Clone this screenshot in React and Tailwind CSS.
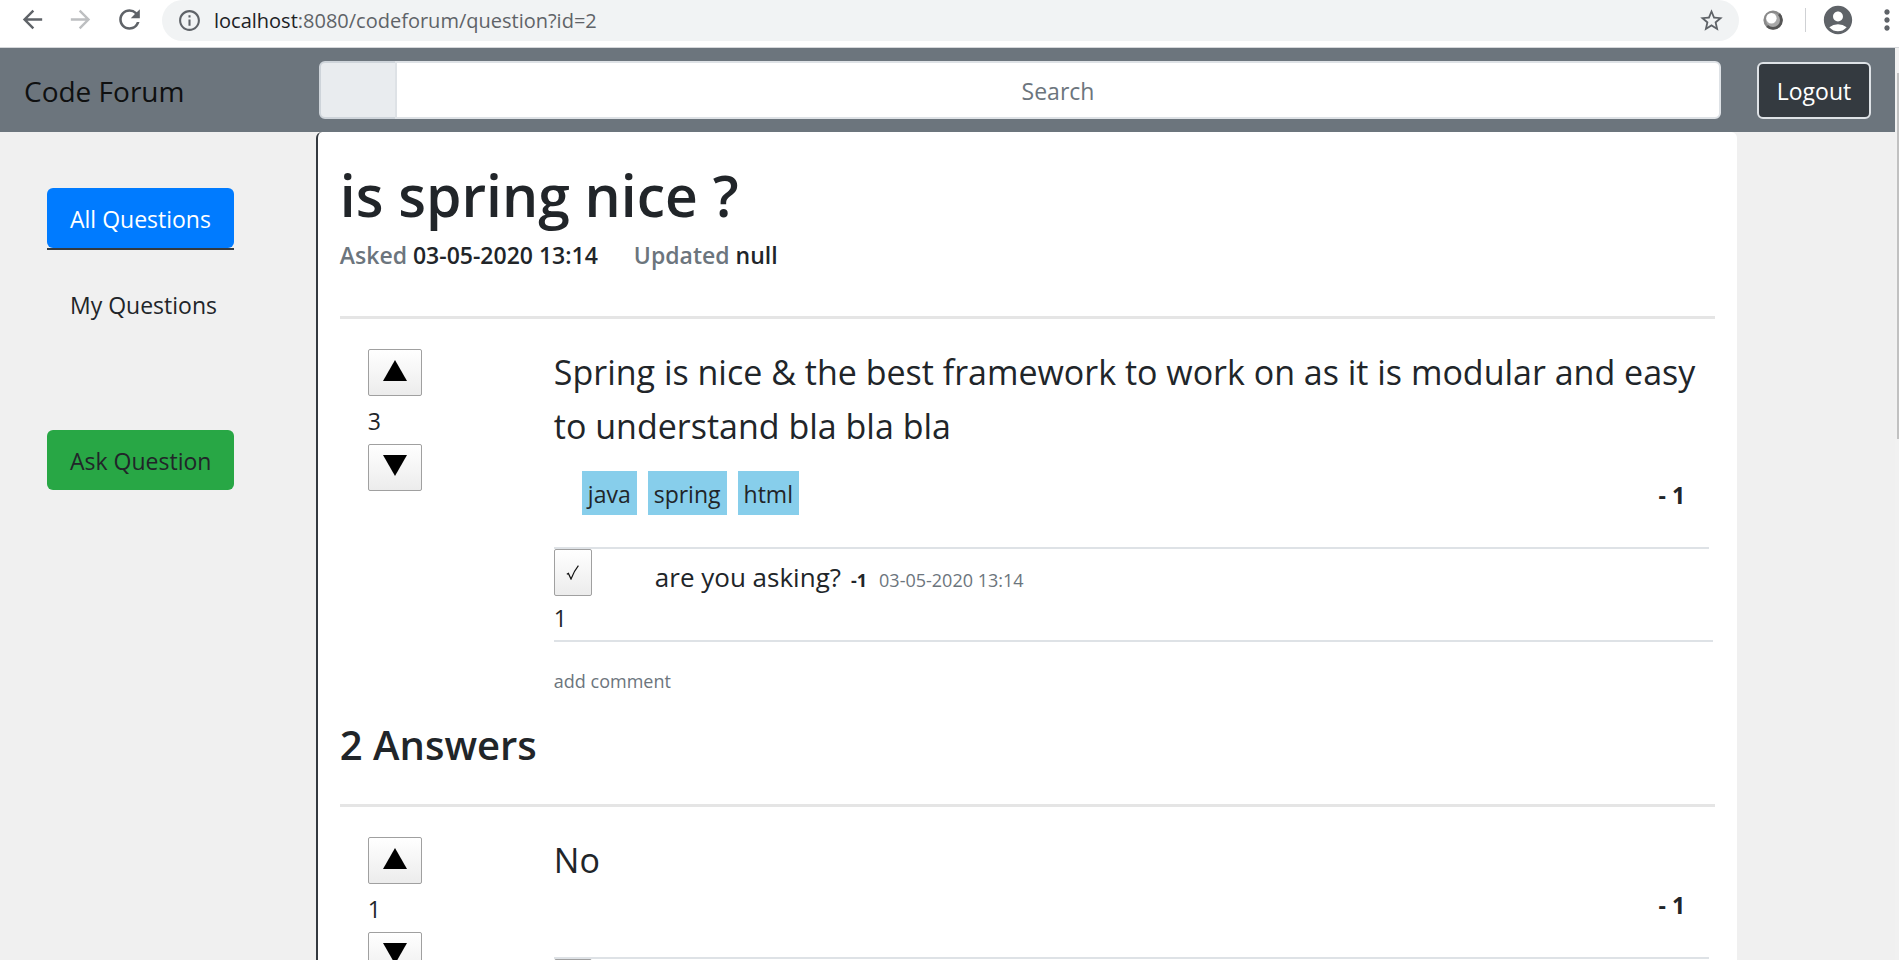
import React from "react";
import {
  MdArrowBack,
  MdArrowForward,
  MdRefresh,
  MdInfoOutline,
  MdStarBorder,
  MdAccountCircle,
  MdMoreVert,
} from "react-icons/md";

const question = {
  title: "is spring nice ?",
  asked: "03-05-2020 13:14",
  updated: "null",
  votes: 3,
  body: "Spring is nice & the best framework to work on as it is modular and easy to understand bla bla bla",
  tags: ["java", "spring", "html"],
  author: "- 1",
  comments: [{ id: 1, text: "are you asking?", author: "-1", date: "03-05-2020 13:14", votes: 1 }],
};

const answer = {
  votes: 1,
  body: "No",
  tags: [],
  author: "- 1",
  comments: [{ id: 2 }],
};

function BrowserBar() {
  return (
    <div className="flex h-12 shrink-0 items-start border-b border-[#d5d7da] bg-white text-[#5f6368]">
      <div className="flex h-[39px] w-[162px] shrink-0 items-center pl-[18px]">
        <button type="button" aria-label="Back" className="w-12">
          <MdArrowBack size={29} />
        </button>
        <button type="button" aria-label="Forward" className="w-12 text-[#bdbfc1]">
          <MdArrowForward size={29} />
        </button>
        <button type="button" aria-label="Reload">
          <MdRefresh size={31} />
        </button>
      </div>
      <div className="flex h-[41px] min-w-0 flex-1 items-center rounded-full bg-[#f1f3f4] pr-3.5 pl-[15px]">
        <MdInfoOutline size={25} className="shrink-0" />
        <div className="ml-3 flex-1 truncate text-[20px] leading-10">
          <span className="text-[#202124]">localhost</span>:8080/codeforum/question?id=2
        </div>
        <button type="button" aria-label="Bookmark this page">
          <MdStarBorder size={27} />
        </button>
      </div>
      <div className="flex h-10 w-40 shrink-0 items-center pl-6">
        <svg viewBox="0 0 20 20" className="size-5 shrink-0" aria-hidden="true">
          <circle cx="10" cy="10" r="9.6" fill="#8a8a8a" />
          <path d="M17 3.2A9.6 9.6 0 0 1 3.2 17Z" fill="#555" />
          <circle cx="10" cy="10" r="7" fill="#a8a8a8" />
          <circle cx="8.4" cy="8.2" r="5.2" fill="#fff" />
        </svg>
        <div className="mr-[15px] ml-[22px] h-6 w-px shrink-0 bg-[#cfd1d4]" />
        <MdAccountCircle size={34} className="shrink-0" />
        <button type="button" aria-label="Menu" className="ml-5 flex w-6 shrink-0 justify-center">
          <MdMoreVert size={32} className="shrink-0" />
        </button>
      </div>
    </div>
  );
}

function Header() {
  return (
    <header className="flex h-[84px] shrink-0 items-center bg-[#6c757d] pr-6">
      <a href="#" className="w-[319px] shrink-0 pt-0.5 pl-6 text-[28px] leading-[42px] text-[#0f1010]">
        Code Forum
      </a>
      <form className="flex h-[58px] min-w-0 flex-1">
        <span className="w-[78px] shrink-0 rounded-l-md border-2 border-[#ced4da] bg-[#e9ecef]" />
        <input
          type="text"
          aria-label="Search"
          placeholder="Search"
          className="-ml-0.5 min-w-0 flex-1 rounded-r-md border-2 border-[#dee2e6] bg-white pt-0.5 text-center text-[23px] placeholder:text-[#6c757d]"
        />
      </form>
      <button
        type="button"
        className="ml-9 h-[57px] w-[114px] rounded-md border-2 border-[#dee2e6] bg-[#343a40] pt-0.5 text-[23px] text-white"
      >
        Logout
      </button>
    </header>
  );
}

function Sidebar() {
  return (
    <nav className="flex w-1/6 shrink-0 flex-col items-start pt-14 pl-[47px] text-[23px] leading-9 text-[#212529]">
      <div className="border-b-2 border-[#343a40]">
        <a href="#" className="block rounded-md bg-[#007bff] px-[23px] pt-[13px] pb-[11px] text-white">
          All Questions
        </a>
      </div>
      <a href="#" className="mt-6 px-[23px] pt-[13px] pb-[11px]">
        My Questions
      </a>
      <a href="#" className="mt-24 rounded-md bg-[#28a745] px-[23px] pt-[13px] pb-[11px]">
        Ask Question
      </a>
    </nav>
  );
}

function VoteButton({ direction }) {
  return (
    <button
      type="button"
      aria-label={direction === "up" ? "Vote up" : "Vote down"}
      className="flex h-[47px] w-[54px] justify-center rounded-xs border border-[#a0a0a0] bg-linear-to-b from-white to-[#ececec] pt-2.5"
    >
      <svg viewBox="0 0 24 21" className="h-[21px] w-6" aria-hidden="true">
        <path d={direction === "up" ? "M12 0L24 21H0Z" : "M0 0H24L12 21Z"} fill="#000" />
      </svg>
    </button>
  );
}

function Comment({ comment }) {
  return (
    <li className="border-b-2 border-[#dee2e6] pb-1">
      <div className="mr-1 flex border-t-2 border-[#dee2e6]">
        <div className="w-[101px] shrink-0">
          <button
            type="button"
            aria-label="Upvote comment"
            className="flex h-[47px] w-[38px] items-center justify-center rounded-xs border border-[#a0a0a0] bg-linear-to-b from-white to-[#ececec]"
          >
            <svg viewBox="0 0 13 15" className="h-[15px] w-[13px]" fill="none" aria-hidden="true">
              <path d="M0.8 9.2L2.4 8.4L5 14Q8 6 12.4 0.6" stroke="#111" strokeWidth="1.2" />
            </svg>
          </button>
          <div className="mt-1 text-[23px] leading-9">{comment.votes}</div>
        </div>
        {comment.text && (
          <p className="flex items-baseline pt-2 leading-10">
            <span className="text-[26px]">{comment.text}</span>
            <span className="ml-2.5 text-[18px] font-bold">{comment.author}</span>
            <span className="ml-3 text-[18px] text-[#6c757d]">{comment.date}</span>
          </p>
        )}
      </div>
    </li>
  );
}

function Post({ post }) {
  return (
    <article className="flex">
      <div className="w-[214px] shrink-0 pt-1 pl-7">
        <VoteButton direction="up" />
        <div className="pt-0.5 text-[23px] leading-[46px]">{post.votes}</div>
        <VoteButton direction="down" />
      </div>
      <div className="min-w-0 flex-1 pr-0.5">
        <p className="text-[34px] leading-[54px]">{post.body}</p>
        <div className="mb-8 flex items-end justify-between pr-7 text-[23px]">
          <ul className="flex gap-[11px] pl-7">
            {post.tags.map((tag) => (
              <li key={tag} className="mt-[18px] bg-[#87ceeb] px-1.5 pt-0.5 leading-[42px]">
                {tag}
              </li>
            ))}
          </ul>
          <span className="pb-0.5 leading-9 font-bold">{post.author}</span>
        </div>
        <ul>
          {post.comments.map((comment) => (
            <Comment key={comment.id} comment={comment} />
          ))}
        </ul>
        {post.comments.some((comment) => comment.text) && (
          <a href="#" className="mt-[25px] block text-[18px] leading-7 text-[#6c757d]">
            add comment
          </a>
        )}
      </div>
    </article>
  );
}

export default function App() {
  return (
    <div className="flex h-screen flex-col overflow-hidden bg-[#f0f0f0] font-['Open_Sans',sans-serif] text-[#212529]">
      <BrowserBar />
      <div className="flex min-h-0 flex-1">
        <div className="flex min-w-0 flex-1 flex-col">
          <Header />
          <div className="flex min-h-0 flex-1 overflow-hidden">
            <Sidebar />
            <main className="w-3/4 self-start rounded-t-md border-l-2 border-[#343a40] bg-white px-[22px] pt-[27px]">
              <h1 className="text-[57px] leading-[72px] font-semibold">{question.title}</h1>
              <div className="mt-1.5 flex gap-9 text-[23px] leading-9 font-semibold">
                <p>
                  <span className="text-[#6c757d]">Asked</span> {question.asked}
                </p>
                <p>
                  <span className="text-[#6c757d]">Updated</span> {question.updated}
                </p>
              </div>
              <hr className="mt-[43px] mb-[26px] border-t-3 border-[#e5e5e5]" />
              <Post post={question} />
              <h2 className="mt-[25px] text-[40px] leading-[50px] font-semibold">2 Answers</h2>
              <hr className="mt-[34px] mb-[26px] border-t-3 border-[#e5e5e5]" />
              <Post post={answer} />
            </main>
          </div>
        </div>
        <div className="flex w-1 shrink-0 justify-end bg-[#f1f1f1] pt-[25px]">
          <div className="h-[366px] w-0.5 bg-[#c1c1c1]" />
        </div>
      </div>
    </div>
  );
}
